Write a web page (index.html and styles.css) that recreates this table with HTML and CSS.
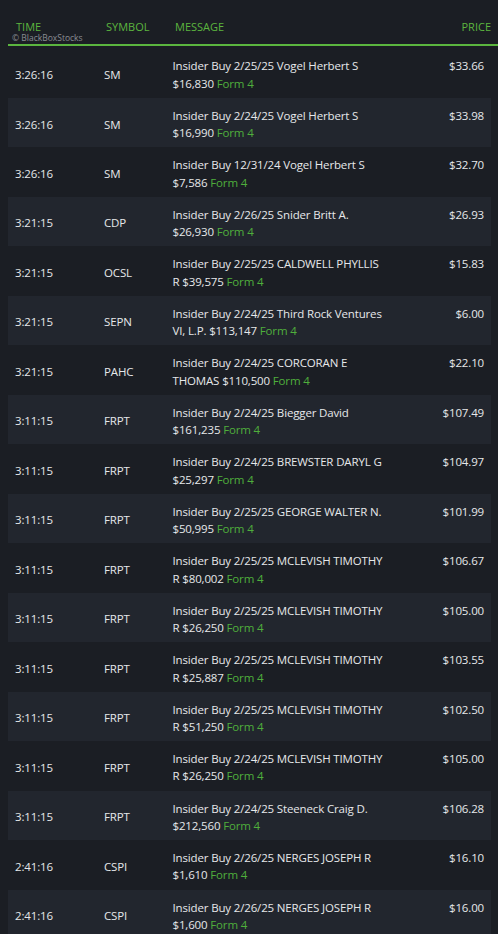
FILE: index.html
```html
<!DOCTYPE html>
<html lang="en">
<head>
<meta charset="utf-8">
<title>Insider Feed</title>
<link rel="stylesheet" href="styles.css">
</head>
<body>
<div class="feed">
  <div class="head">
    <div class="h-time">TIME<span class="wm">© BlackBoxStocks</span></div>
    <div>SYMBOL</div>
    <div>MESSAGE</div>
    <div class="h-price">PRICE</div>
  </div>
  <div class="rows">
    <div class="row"><div class="time">3:26:16</div><div class="sym">SM</div><div class="msg">Insider Buy 2/25/25 Vogel Herbert S <span class="amt">$16,830</span> <span class="form">Form 4</span></div><div class="price">$33.66</div></div>
    <div class="row"><div class="time">3:26:16</div><div class="sym">SM</div><div class="msg">Insider Buy 2/24/25 Vogel Herbert S <span class="amt">$16,990</span> <span class="form">Form 4</span></div><div class="price">$33.98</div></div>
    <div class="row"><div class="time">3:26:16</div><div class="sym">SM</div><div class="msg">Insider Buy 12/31/24 Vogel Herbert S <span class="amt">$7,586</span> <span class="form">Form 4</span></div><div class="price">$32.70</div></div>
    <div class="row"><div class="time">3:21:15</div><div class="sym">CDP</div><div class="msg">Insider Buy 2/26/25 Snider Britt A. <span class="amt">$26,930</span> <span class="form">Form 4</span></div><div class="price">$26.93</div></div>
    <div class="row"><div class="time">3:21:15</div><div class="sym">OCSL</div><div class="msg">Insider Buy 2/25/25 CALDWELL PHYLLIS R <span class="amt">$39,575</span> <span class="form">Form 4</span></div><div class="price">$15.83</div></div>
    <div class="row"><div class="time">3:21:15</div><div class="sym">SEPN</div><div class="msg">Insider Buy 2/24/25 Third Rock Ventures VI, L.P. <span class="amt">$113,147</span> <span class="form">Form 4</span></div><div class="price">$6.00</div></div>
    <div class="row"><div class="time">3:21:15</div><div class="sym">PAHC</div><div class="msg">Insider Buy 2/24/25 CORCORAN E THOMAS <span class="amt">$110,500</span> <span class="form">Form 4</span></div><div class="price">$22.10</div></div>
    <div class="row"><div class="time">3:11:15</div><div class="sym">FRPT</div><div class="msg">Insider Buy 2/24/25 Biegger David <span class="amt">$161,235</span> <span class="form">Form 4</span></div><div class="price">$107.49</div></div>
    <div class="row"><div class="time">3:11:15</div><div class="sym">FRPT</div><div class="msg">Insider Buy 2/24/25 BREWSTER DARYL G <span class="amt">$25,297</span> <span class="form">Form 4</span></div><div class="price">$104.97</div></div>
    <div class="row"><div class="time">3:11:15</div><div class="sym">FRPT</div><div class="msg">Insider Buy 2/25/25 GEORGE WALTER N. <span class="amt">$50,995</span> <span class="form">Form 4</span></div><div class="price">$101.99</div></div>
    <div class="row"><div class="time">3:11:15</div><div class="sym">FRPT</div><div class="msg">Insider Buy 2/25/25 MCLEVISH TIMOTHY R <span class="amt">$80,002</span> <span class="form">Form 4</span></div><div class="price">$106.67</div></div>
    <div class="row"><div class="time">3:11:15</div><div class="sym">FRPT</div><div class="msg">Insider Buy 2/25/25 MCLEVISH TIMOTHY R <span class="amt">$26,250</span> <span class="form">Form 4</span></div><div class="price">$105.00</div></div>
    <div class="row"><div class="time">3:11:15</div><div class="sym">FRPT</div><div class="msg">Insider Buy 2/25/25 MCLEVISH TIMOTHY R <span class="amt">$25,887</span> <span class="form">Form 4</span></div><div class="price">$103.55</div></div>
    <div class="row"><div class="time">3:11:15</div><div class="sym">FRPT</div><div class="msg">Insider Buy 2/25/25 MCLEVISH TIMOTHY R <span class="amt">$51,250</span> <span class="form">Form 4</span></div><div class="price">$102.50</div></div>
    <div class="row"><div class="time">3:11:15</div><div class="sym">FRPT</div><div class="msg">Insider Buy 2/24/25 MCLEVISH TIMOTHY R <span class="amt">$26,250</span> <span class="form">Form 4</span></div><div class="price">$105.00</div></div>
    <div class="row"><div class="time">3:11:15</div><div class="sym">FRPT</div><div class="msg">Insider Buy 2/24/25 Steeneck Craig D. <span class="amt">$212,560</span> <span class="form">Form 4</span></div><div class="price">$106.28</div></div>
    <div class="row"><div class="time">2:41:16</div><div class="sym">CSPI</div><div class="msg">Insider Buy 2/26/25 NERGES JOSEPH R <span class="amt">$1,610</span> <span class="form">Form 4</span></div><div class="price">$16.10</div></div>
    <div class="row"><div class="time">2:41:16</div><div class="sym">CSPI</div><div class="msg">Insider Buy 2/26/25 NERGES JOSEPH R <span class="amt">$1,600</span> <span class="form">Form 4</span></div><div class="price">$16.00</div></div>
  </div>
</div>
</body>
</html>
```

FILE: styles.css
```css
html, body {
  margin: 0;
  padding: 0;
  background: #1b1e24;
  overflow: hidden;
}

.feed {
  padding-left: 8px;
  font-family: "Open Sans", "Noto Sans", sans-serif;
  color: #e6e8ea;
}

.head {
  display: grid;
  grid-template-columns: 90px 69px 1fr auto;
  align-items: start;
  height: 46px;
  padding: 19px 7px 0 8px;
  box-sizing: border-box;
  border-bottom: 2px solid #5bb53f;
  font-size: 11px;
  line-height: 15px;
  color: #5bb53f;
}

.h-time {
  display: flex;
  flex-direction: column;
}

.wm {
  margin-left: -4px;
  font-size: 8.5px;
  line-height: 8px;
  color: #8a8d93;
  white-space: nowrap;
}

.h-price {
  text-align: right;
}

.rows {
  margin-top: 2.5px;
  width: 483px;
}

.row {
  display: grid;
  grid-template-columns: 89px 68.5px 215px 1fr;
  padding: 8.9px 7px 6px;
  font-size: 11.5px;
  letter-spacing: -0.15px;
  line-height: 17.3px;
}

.row:nth-child(even) {
  background: #22262e;
}

.time, .sym {
  align-self: center;
}

.price {
  text-align: right;
}

.form {
  color: #4fae3c;
}
```
